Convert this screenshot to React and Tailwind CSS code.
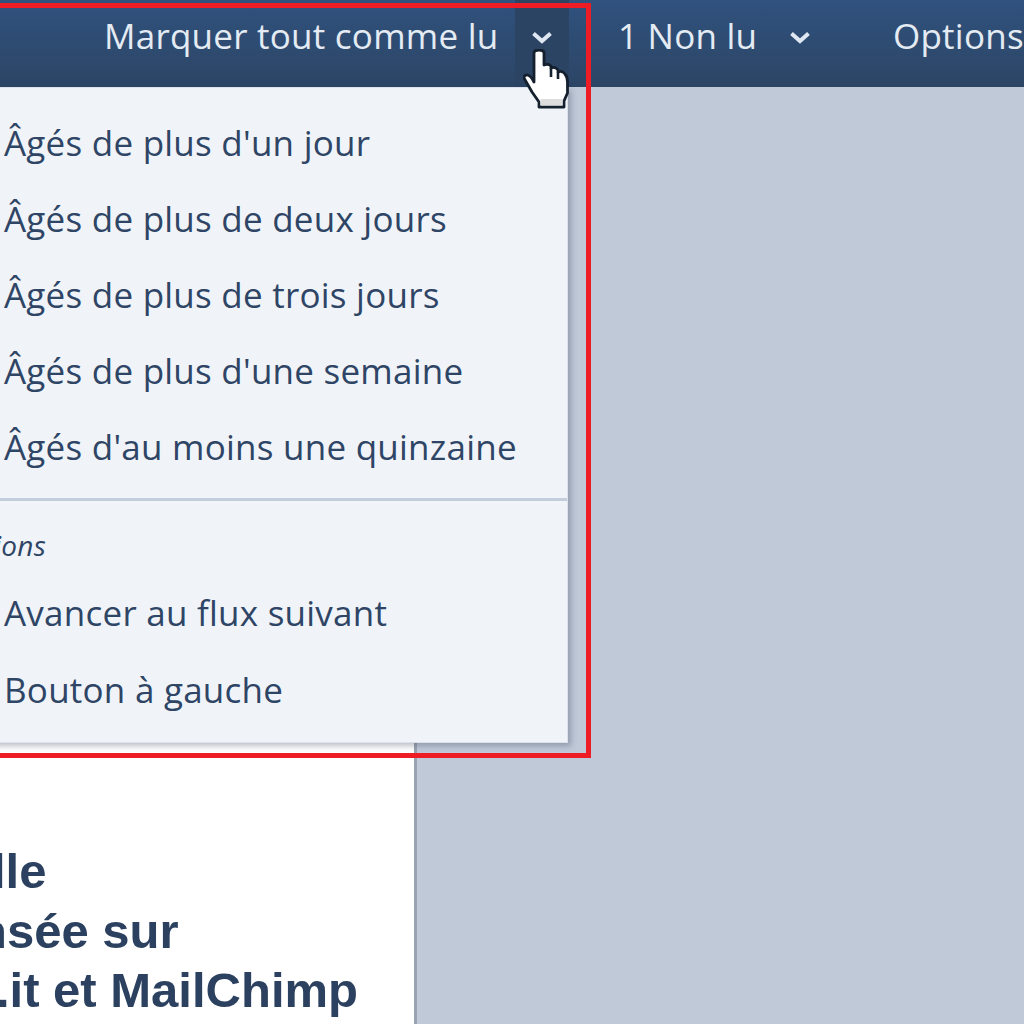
import React from 'react';

const Chevron = () => (
  <svg width="22" height="13" viewBox="0 0 22 13" fill="none" className="block">
    <path d="M2.5 2.5 L11 10 L19.5 2.5" stroke="#dfe8f2" strokeWidth="4" />
  </svg>
);

const HandCursor = () => (
  <svg width="46" height="60" viewBox="0 0 46 60" className="absolute left-[523px] top-[49px]">
    <path
      d="M11 4 Q11 1 16 1 Q21 1 21 4 L21 16 Q25 14 28 17 L28 19 Q32 17 35 21 L35 23 Q39 21 42 25 Q44.5 28 44.5 33 L44.5 44 L41 52 L41 58 L16 58 L16 53 L9 43 L1.5 30 Q0 26.5 3.5 26 Q7 25.5 11 33 Z"
      fill="#ffffff"
      stroke="#15202e"
      strokeWidth="2.8"
      strokeLinejoin="round"
    />
    <path d="M17.5 50 H39.5 V56.5 H17.5 Z" fill="#dedede" />
    <path d="M28 19 V28 M35 23 V30" stroke="#15202e" strokeWidth="2.6" />
  </svg>
);

const MenuItem = ({ children }) => (
  <div className="h-[76px] flex items-center pl-[63px] whitespace-nowrap">{children}</div>
);

const ages = [
  "Âgés de plus d'un jour",
  'Âgés de plus de deux jours',
  'Âgés de plus de trois jours',
  "Âgés de plus d'une semaine",
  "Âgés d'au moins une quinzaine",
];

export default function App() {
  return (
    <div className="relative w-[1024px] h-[1024px] overflow-hidden bg-[#c0c9d8] font-['Open_Sans',sans-serif]">
      {/* Header */}
      <div className="h-[87px] flex items-center pl-[104px] bg-gradient-to-b from-[#30527e] to-[#2c4565] text-[35px] tracking-[0.24px] text-[#e4ebf3] whitespace-nowrap overflow-hidden">
        <span className="pb-[14px] w-[411px]">Marquer tout comme lu</span>
        <div className="w-[54px] h-[87px] shrink-0 pb-[12px] flex items-center justify-center bg-[#2b4464]">
          <Chevron />
        </div>
        <span className="pb-[14px] ml-[49px] w-[137px]">1 Non lu</span>
        <div className="ml-[34px] pb-[12px] shrink-0"><Chevron /></div>
        <span className="pb-[14px] ml-[82px] shrink-0">Options</span>
      </div>

      {/* Body */}
      <div className="h-[937px] w-[417px] bg-white border-r-[3px] border-[#99a3b1] pt-[755px] font-['Liberation_Sans',sans-serif] font-bold text-[49px] leading-[59.5px] text-[#2c4160] whitespace-nowrap overflow-hidden">
        <div className="-ml-[8px]">lle</div>
        <div className="-ml-[23px]">nsée sur</div>
        <div className="-ml-[34px]">L.it et MailChimp</div>
      </div>

      {/* Dropdown */}
      <div className="absolute left-[-60px] top-[87px] w-[628px] h-[656px] bg-[#f0f4f9] border border-[#dbe2ec] shadow-[3px_3px_6px_rgba(60,70,90,0.35)] text-[35px] tracking-[0.24px] text-[#2f4565]">
        <div className="pt-[17px]">
          {ages.map((label) => (
            <MenuItem key={label}>{label}</MenuItem>
          ))}
        </div>
        <div className="mt-[13px] h-[3px] bg-[#c3cddb]" />
        <div className="h-[74px] flex items-center justify-end w-[105px] pt-[14px] text-[28px] italic whitespace-nowrap overflow-hidden">
          Options
        </div>
        <MenuItem>Avancer au flux suivant</MenuItem>
        <div className="pt-[1px]">
          <MenuItem>Bouton à gauche</MenuItem>
        </div>
      </div>

      {/* Red highlight */}
      <div className="absolute left-[-20px] top-[3px] w-[611px] h-[755px] border-[5px] border-[#ee1c25]" />

      <HandCursor />
    </div>
  );
}
